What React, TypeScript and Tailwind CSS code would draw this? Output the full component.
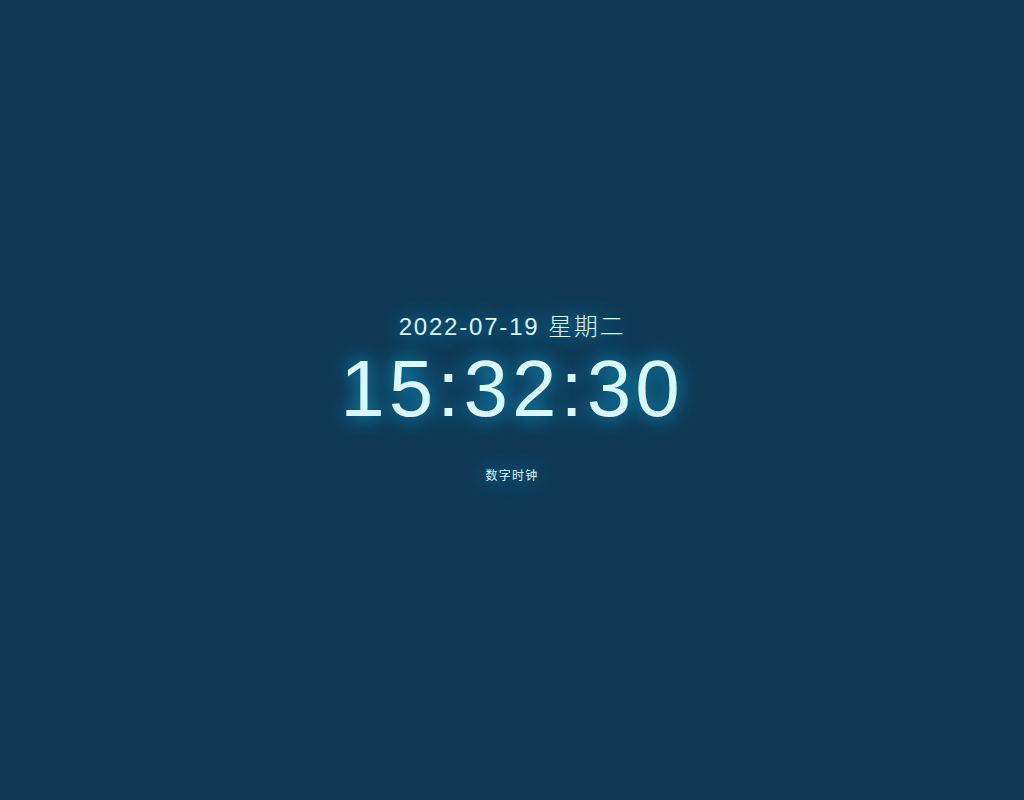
export default function App() {
  const glow = "[text-shadow:0_0_20px_rgba(10,175,230,1),0_0_20px_rgba(10,175,230,0)]";
  return (
    <div
      className={`flex h-screen w-full flex-col items-center justify-center bg-[#0f3854] text-[#daf6ff] ${glow}`}
      style={{ fontFamily: '"Liberation Sans", "Noto Sans CJK SC", sans-serif' }}
    >
      <p className="text-[24px] font-light leading-[1.2] tracking-[0.075em]">2022-07-19 星期二</p>
      <p className="py-[5px] text-[80px] leading-[84px] tracking-[0.05em]">15:32:30</p>
      <p className="mb-[3px] pt-[33px] text-[12px] leading-[1.2] tracking-[0.1em]">数字时钟</p>
    </div>
  );
}
